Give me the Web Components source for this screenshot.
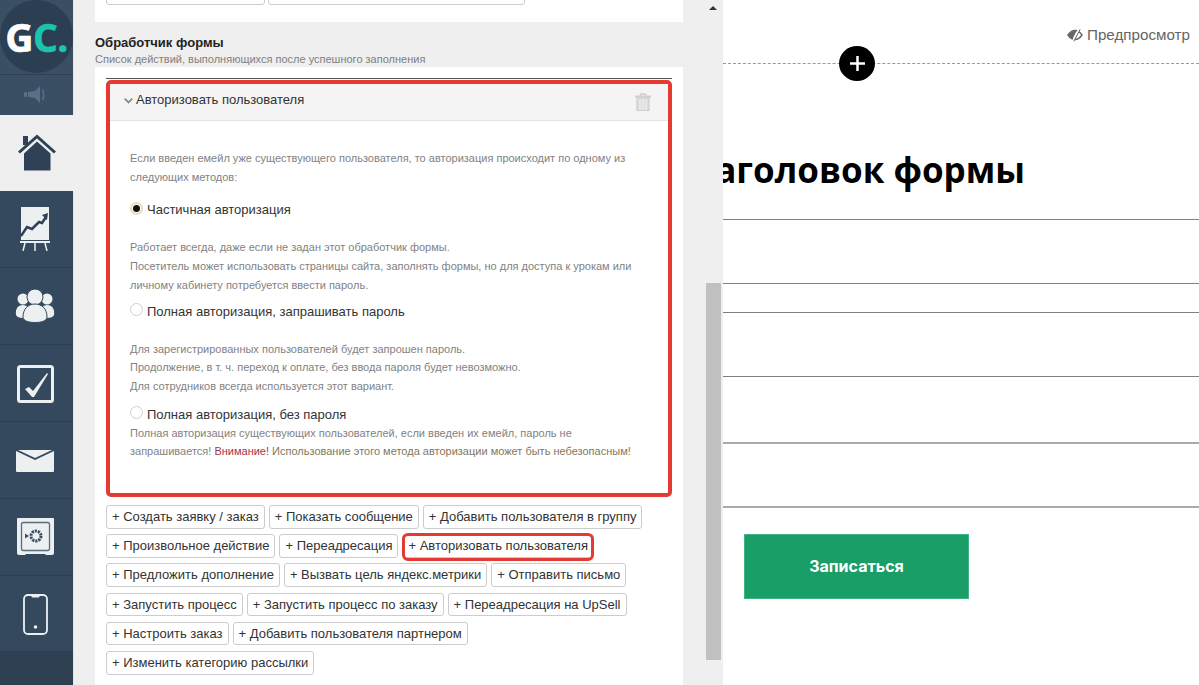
<!DOCTYPE html>
<html lang="ru"><head><meta charset="utf-8"><title>Конструктор формы</title>
<style>
html,body{margin:0;padding:0;height:685px;overflow:hidden;background:#fff;font-family:"Liberation Sans",Arial,sans-serif}
gc-app{height:685px}
</style></head><body>
<gc-app>
  <gc-sidebar slot="sidebar">
    <gc-nav-item icon="home" active h="76"></gc-nav-item>
    <gc-nav-item icon="chart" h="77"></gc-nav-item>
    <gc-nav-item icon="users" h="77"></gc-nav-item>
    <gc-nav-item icon="tasks" h="77"></gc-nav-item>
    <gc-nav-item icon="mail" h="77"></gc-nav-item>
    <gc-nav-item icon="safe" h="77"></gc-nav-item>
    <gc-nav-item icon="phone" h="76"></gc-nav-item>
  </gc-sidebar>
  <gc-panel slot="panel">
    <gc-handler>
      <gc-desc>Если введен емейл уже существующего пользователя, то авторизация происходит по одному из следующих методов:</gc-desc>
      <gc-radio checked top="14" gap="18">Частичная авторизация</gc-radio>
      <gc-desc>Работает всегда, даже если не задан этот обработчик формы.<br>Посетитель может использовать страницы сайта, заполнять формы, но для доступа к урокам или<br>личному кабинету потребуется ввести пароль.</gc-desc>
      <gc-radio top="7" gap="18">Полная авторизация, запрашивать пароль</gc-radio>
      <gc-desc>Для зарегистрированных пользователей будет запрошен пароль.<br>Продолжение, в т. ч. переход к оплате, без ввода пароля будет невозможно.<br>Для сотрудников всегда используется этот вариант.</gc-desc>
      <gc-radio top="9" gap="-1">Полная авторизация, без пароля</gc-radio>
      <gc-desc>Полная авторизация существующих пользователей, если введен их емейл, пароль не<br>запрашивается! <span style="color:#a8324a">Внимание!</span> <span style="color:#85775c">Использование этого метода авторизации может быть небезопасным!</span></gc-desc>
    </gc-handler>
    <gc-chips>
      <gc-chip>+ Создать заявку / заказ</gc-chip>
      <gc-chip>+ Показать сообщение</gc-chip>
      <gc-chip>+ Добавить пользователя в группу</gc-chip>
      <gc-chip>+ Произвольное действие</gc-chip>
      <gc-chip>+ Переадресация</gc-chip>
      <gc-chip marked>+ Авторизовать пользователя</gc-chip>
      <gc-chip>+ Предложить дополнение</gc-chip>
      <gc-chip>+ Вызвать цель яндекс.метрики</gc-chip>
      <gc-chip>+ Отправить письмо</gc-chip>
      <gc-chip>+ Запустить процесс</gc-chip>
      <gc-chip>+ Запустить процесс по заказу</gc-chip>
      <gc-chip>+ Переадресация на UpSell</gc-chip>
      <gc-chip>+ Настроить заказ</gc-chip>
      <gc-chip>+ Добавить пользователя партнером</gc-chip>
      <gc-chip>+ Изменить категорию рассылки</gc-chip>
    </gc-chips>
  </gc-panel>
  <gc-scroll slot="scroll"></gc-scroll>
  <gc-stage slot="stage"></gc-stage>
</gc-app>
<script>
function def(name, css, html, init){
  customElements.define(name, class extends HTMLElement{
    constructor(){super();const r=this.attachShadow({mode:'open'});r.innerHTML='<style>'+css+'</style>'+(typeof html==='function'?html(this):html);}
    connectedCallback(){ if(init) init(this); }
  });
}
const L='#ecf0f1', D='#2e4156';
const ICONS={
 home:`<svg width="40" height="38" viewBox="0 0 40 38" style="margin-left:2px"><rect x="6" y="2" width="5" height="9" fill="${D}"/><path d="M2 18.500 L20 2.500 L38 18.500" fill="none" stroke="${D}" stroke-width="3"/><path d="M20 7.500 L33.500 19.500 V36.500 H7 V19.500Z" fill="${D}"/></svg>`,
 chart:`<svg width="30" height="44" viewBox="0 0 30 44"><rect x="1" y="0" width="28" height="33" fill="${L}"/><path d="M1 29 L7 20 L12 22 L19 15 L22 16 L26 10" fill="none" stroke="${D}" stroke-width="2.500"/><path d="M22 8 L28 6 L27 13Z" fill="${D}"/><rect x="0" y="34" width="30" height="2" fill="${L}"/><path d="M5 36 L3 44 M15 36 V44 M25 36 L27 44" stroke="${L}" stroke-width="1.500"/></svg>`,
 users:`<svg width="40" height="34" viewBox="0 0 40 34" fill="${L}"><circle cx="8" cy="10" r="5.500"/><circle cx="32" cy="10" r="5.500"/><path d="M1 26 C0 20 3 16 8 16 L12 17 L8 29 C4 29 2 28 1 26Z"/><path d="M39 26 C40 20 37 16 32 16 L28 17 L32 29 C36 29 38 28 39 26Z"/><circle cx="20" cy="8" r="8" stroke="#34495e" stroke-width="1"/><path d="M8 28 C8 20 13 15 20 15 C27 15 32 20 32 28 C32 32 26 33.500 20 33.500 C14 33.500 8 32 8 28Z" stroke="#34495e" stroke-width="1"/></svg>`,
 tasks:`<svg width="37" height="38" viewBox="0 0 37 38" style="margin-top:1px"><rect x="1.500" y="1.500" width="34" height="35" rx="2" fill="none" stroke="${L}" stroke-width="3"/><path d="M8 24 L12 22 L16 26 L30 8 L31 9 L17 32 L15 32Z" fill="${L}"/></svg>`,
 mail:`<svg width="38" height="23" viewBox="0 0 38 23" style="margin-top:2px"><path d="M0 1 L19 10 L38 1 V21 Q38 22 37 22 H1 Q0 22 0 21Z" fill="${L}"/><path d="M2 0 H36 L19 8Z" fill="${L}"/></svg>`,
 safe:`<svg width="37" height="38" viewBox="0 0 37 38"><path d="M1 0 H36 Q37 0 37 1 V35 Q37 37 35 37 H29 L28 36 H9 L8 37 H2 Q0 37 0 35 V1 Q0 0 1 0Z" fill="${L}"/><rect x="4.500" y="4.500" width="28" height="28" rx="2" fill="none" stroke="#5a6e82" stroke-width="1.300"/><circle cx="19" cy="18" r="5" fill="none" stroke="#3a4f65" stroke-width="3" stroke-dasharray="2.200 .9"/><path d="M8 15.500 L12 18 L8 20.500Z" fill="#3a4f65"/></svg>`,
 phone:`<svg width="25" height="41" viewBox="0 0 25 41" style="margin-top:2px"><rect x="1" y="1" width="23" height="39" rx="4" fill="none" stroke="${L}" stroke-width="1.800"/><rect x="8.500" y="1" width="8" height="2.500" rx="1" fill="${L}"/><circle cx="12.500" cy="33" r="1.800" fill="${L}"/></svg>`
};

def('gc-app',`:host{display:flex;width:1199px;height:685px;overflow:hidden}
  ::slotted([slot=sidebar]){flex:none} ::slotted([slot=panel]){flex:none} ::slotted([slot=scroll]){flex:none} ::slotted([slot=stage]){flex:1;min-width:0}`,
  `<slot name="sidebar"></slot><slot name="panel"></slot><slot name="scroll"></slot><slot name="stage"></slot>`);

def('gc-sidebar',`:host{display:flex;flex-direction:column;width:73px;height:685px;background:#34495e;border-right:1px solid #dfe6ea;box-sizing:content-box}
  .logo{height:74px;background:#3a4e64;border-bottom:1px solid #2e4052;flex:none;overflow:hidden}
  .disc{width:73px;height:73px;border-radius:50%;background:#2c3e52;display:flex;align-items:center;justify-content:center;font:700 39px/73px "Open Sans",sans-serif;letter-spacing:-.5px;color:#fff;-webkit-text-stroke:.6px currentColor}
  .disc b{color:#1cc4ae;font-weight:700}
  .mute{height:40px;flex:none;background:#3a4e64;display:flex;align-items:center;justify-content:center;padding-right:2px}
  .foot{flex:1;background:#2f4053}
  .items{display:flex;flex-direction:column;flex:none}`,
  `<div class="logo"><div class="disc">G<b>C.</b></div></div>
   <div class="mute"><svg width="24" height="18" viewBox="0 0 24 18" fill="#587089"><rect x="0" y="6" width="3" height="5" rx="1"/><path d="M4 6 L11 5 L16 0 V17 L11 12 L4 11Z"/><path d="M18.500 3.500 Q21 9 18.500 14" fill="none" stroke="#587089" stroke-width="1.500"/></svg></div>
   <div class="items"><slot></slot></div><div class="foot"></div>`);

def('gc-nav-item',`:host{display:flex;align-items:center;justify-content:center;box-sizing:border-box;border-bottom:1px solid #2c3e50;background:#34495e;padding-right:3px}
  :host([active]){background:#efefef;border-bottom:0;margin-right:-1px}
  svg{display:block}`,
  el=>ICONS[el.getAttribute('icon')],
  el=>{el.style.height=el.getAttribute('h')+'px';});

def('gc-panel',`:host{display:flex;flex-direction:column;width:609px;height:685px;box-sizing:border-box;padding-left:21px;background:#efefef}
  .top{height:22px;background:#fff;overflow:hidden;flex:none;padding-left:11px;width:577px}
  .top div{display:flex;gap:3px;margin-top:-19px}
  .top i{display:block;height:24px;box-sizing:border-box;border:1px solid #ccc;border-radius:3px;background:#fff}
  h3{font:700 13px/16px "Liberation Sans",Arial,sans-serif;color:#222;margin:13px 0 0}
  p{font:11px/16px "Liberation Sans",Arial,sans-serif;color:#808080;margin:0}
  .card{flex:1;background:#fff;padding:11px 0 0 11px}
  .bar{width:566px;border-top:1px solid #555;height:0}`,
  `<div class="top"><div><i style="width:159px"></i><i style="width:257px"></i></div></div>
   <h3>Обработчик формы</h3><p>Список действий, выполняющихся после успешного заполнения</p>
   <div class="card"><div class="bar"></div><slot></slot></div>`);

def('gc-handler',`:host{display:block;box-sizing:border-box;width:566px;height:417px;margin-top:1px;border:4px solid #e53a33;border-radius:5px;background:#fff;overflow:hidden}
  .head{background:#f4f4f4;border-bottom:1px solid #e4e4e4;display:flex;align-items:center;padding:0 17px 5px 14px;height:31px;font-size:13px;color:#333;gap:3px}
  .head span{flex:1}
  .body{padding:28px 20px 0 20px}`,
  `<div class="head"><svg width="9" height="6" viewBox="0 0 9 6" style="margin-top:3px"><path d="M.7 .7 L4.500 4.500 L8.300 .7" fill="none" stroke="#8a8a8a" stroke-width="1.800"/></svg><span>Авторизовать пользователя</span>
   <svg width="16" height="18" viewBox="0 0 16 18" fill="none" stroke="#cfcfcf" stroke-width="1.300" style="margin-top:5px"><path d="M0 3.500 H16" stroke-width="2"/><path d="M5.500 3 V1 H10.500 V3"/><path d="M2 5 H14 V17.500 H2Z" fill="#dcdcdc"/><path d="M5 6 V17 M8 6 V17 M11 6 V17" stroke="#f4f4f4" stroke-width="1"/></svg></div>
   <div class="body"><slot></slot></div>`);

def('gc-desc',`:host{display:block;font:11px/18.7px "Liberation Sans",Arial,sans-serif;color:#828282}`,`<slot></slot>`);

def('gc-radio',`:host{display:flex;align-items:center;font:13px/20px "Liberation Sans",Arial,sans-serif;color:#333;gap:4px}
  .r{width:13px;height:13px;border-radius:50%;box-sizing:border-box;background:#fff;border:1px solid #cfcfcf;flex:none;margin-top:-4px;display:flex;align-items:center;justify-content:center}
  :host([checked]) .r{border:2px solid #e9dcbc}
  :host([checked]) .r::after{content:"";width:7px;height:7px;border-radius:50%;background:#111}`,
  `<span class="r"></span><span><slot></slot></span>`,
  el=>{el.style.marginTop=el.getAttribute('top')+'px';el.style.marginBottom=el.getAttribute('gap')+'px';});

def('gc-chips',`:host{display:flex;flex-wrap:wrap;width:566px;gap:5.6px 4px;margin-top:8px}`,`<slot></slot>`);

def('gc-chip',`:host{display:block;position:relative;box-sizing:border-box;height:23.6px;padding:0 5px;border:1px solid #ccc;border-radius:3px;background:#fff;font:13px/22px "Liberation Sans",Arial,sans-serif;color:#333;white-space:nowrap}
  :host([marked])::after{content:"";position:absolute;left:-1px;right:-1px;top:-2px;bottom:-4px;border:3px solid #e53a33;border-radius:6px}`,
  `<slot></slot>`);

def('gc-scroll',`:host{display:flex;flex-direction:column;align-items:flex-start;width:40px;height:685px;box-sizing:border-box;background:#efefef;padding:6px 0 0 23px}
  .up{width:0;height:0;border-left:4.500px solid transparent;border-right:4.500px solid transparent;border-bottom:4.500px solid #333;margin-left:3px}
  .thumb{width:15px;height:377px;background:#c0c0c0;margin-top:272.500px}`,
  `<div class="up"></div><div class="thumb"></div>`);

def('gc-stage',`:host{display:block;position:relative;height:685px;background:#fff;overflow:hidden}
  .bar{height:64px;box-sizing:border-box;border-bottom:1px dashed #999;display:flex;justify-content:flex-end;align-items:flex-start;padding:26px 9px 0 0;gap:4px;font:15.2px/18px "Liberation Sans",Arial,sans-serif;color:#666}
  .bar svg{margin-top:2px}
  .add{position:absolute;left:116px;top:46px;width:36px;height:35px;border-radius:50%;background:#000;display:flex;align-items:center;justify-content:center}
  h1{margin:0;height:155px;box-sizing:border-box;padding-top:81px;margin-left:-30.5px;font:700 35px/50px "Open Sans",sans-serif;color:#000;white-space:nowrap}
  .rows div{border-bottom:1px solid #808080;box-sizing:border-box}
  .rows div.s{border-bottom:2px solid #aaa}
  button{display:block;margin:26px 0 0 21px;width:225px;height:65px;background:#1a9e68;border:1px solid #3fb386;color:#fff;font:700 16px/20px Inter,sans-serif;padding:0 0 2px}`,
  `<div class="bar"><svg width="16" height="14" viewBox="0 0 16 14"><path d="M1 7 Q4 2.500 8 2.500 Q12 2.500 15 7 Q12 11.500 8 11.500 Q4 11.500 1 7Z" fill="none" stroke="#666" stroke-width="1.400"/><path d="M1.500 7 Q4 3 8 3 L9.500 3 L5.500 11 Q3.500 10 1.500 7Z" fill="#666"/><path d="M12.500 .8 L6 13.200" stroke="#fff" stroke-width="2.200"/><path d="M13.200 1.200 L6.800 13.400" stroke="#666" stroke-width="1"/></svg><span>Предпросмотр</span></div>
   <div class="add"><svg width="17" height="17" viewBox="0 0 17 17"><path d="M8.500 1 V16 M1 8.500 H16" stroke="#fff" stroke-width="2.500"/></svg></div>
   <h1>Заголовок формы</h1>
   <div class="rows"><div style="height:1px"></div><div style="height:64px"></div><div style="height:29px"></div><div style="height:64px"></div><div class="s" style="height:67px"></div><div class="s" style="height:64px"></div></div>
   <button>Записаться</button>`);
</script>
</body></html>
